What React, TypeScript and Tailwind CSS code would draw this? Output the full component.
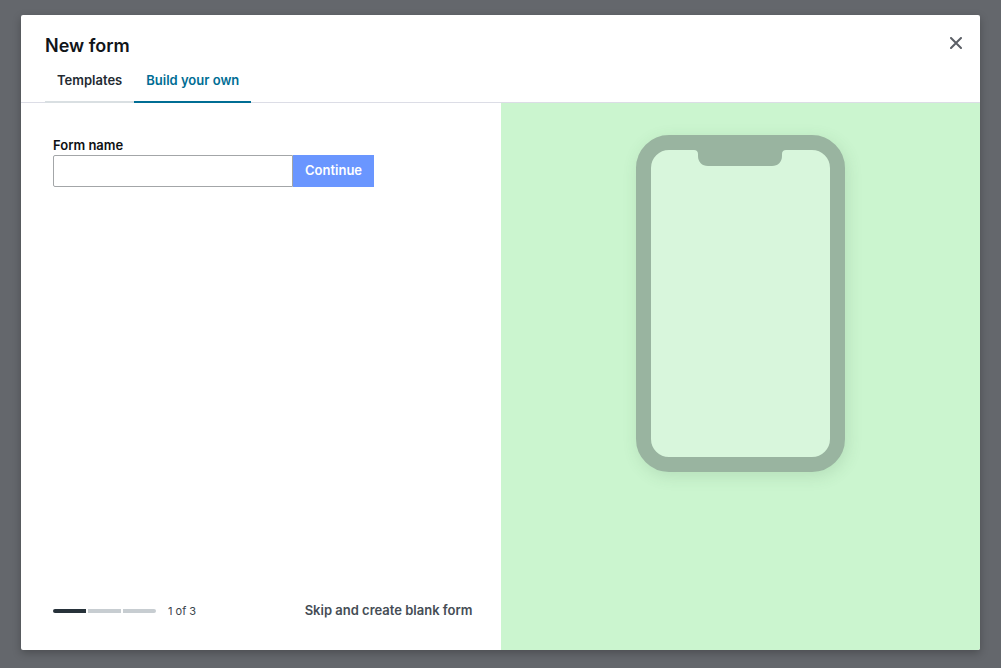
import { useState } from "react";

const TABS = ["Templates", "Build your own"];
const STEPS = 3;

function Tabs({ active, onSelect }: { active: string; onSelect: (tab: string) => void }) {
  return (
    <div role="tablist" aria-label="Form source" className="-mb-px flex px-6">
      {TABS.map((tab) => {
        const selected = tab === active;
        return (
          <button
            key={tab}
            type="button"
            role="tab"
            aria-selected={selected}
            onClick={() => onSelect(tab)}
            className={
              selected
                ? "h-[42px] border-b-2 border-[#006d94] px-3 text-[13px] font-semibold text-[#006d94]"
                : "h-[42px] border-b-2 border-[#d9dfe2] px-3 text-[13px] font-semibold text-[#232a31]"
            }
          >
            {tab}
          </button>
        );
      })}
    </div>
  );
}

function Phone() {
  return (
    <div className="h-[337px] w-[209px] rounded-[33px] border-[15px] border-[#99b4a0] bg-[#d8f6dc] shadow-[2px_4px_16px_rgba(60,100,70,0.15)]">
      <svg viewBox="0 0 92 16" className="mx-auto block h-4 w-[92px]" aria-hidden="true">
        <path
          d="M0 0H92C89.500 0 88 1.500 88 4V6C88 12 84 16 78 16H14C8 16 4 12 4 6V4C4 1.500 2.500 0 0 0Z"
          fill="#99b4a0"
        />
      </svg>
    </div>
  );
}

function Progress({ step }: { step: number }) {
  return (
    <div className="flex items-center gap-3">
      <div className="flex gap-0.5 overflow-hidden rounded-full" aria-hidden="true">
        {Array.from({ length: STEPS }, (_, i) => (
          <span key={i} className={i < step ? "h-1 w-[33px] bg-[#27323a]" : "h-1 w-[33px] bg-[#c7cdd1]"} />
        ))}
      </div>
      <span className="text-[11px] leading-4 text-[#3b444c]">
        {step} of {STEPS}
      </span>
    </div>
  );
}

export default function App() {
  const [tab, setTab] = useState("Build your own");
  const [name, setName] = useState("");

  return (
    <div className="flex min-h-screen bg-[#64676c] px-[21px] pt-[15px] pb-[18px] font-['Inter','Liberation_Sans',sans-serif]">
      <section
        role="dialog"
        aria-labelledby="dialog-title"
        className="flex flex-1 flex-col overflow-hidden rounded-xs bg-white shadow-[0_3px_8px_rgba(0,0,0,0.25)]"
      >
        <header className="border-b border-[#dcdde6]">
          <div className="flex items-center justify-between px-4 pt-[17px] pb-px">
            <h1 id="dialog-title" className="pl-2 text-lg leading-7 font-semibold text-[#111519]">
              New form
            </h1>
            <button type="button" aria-label="Close" className="-mt-1.5 flex size-4 items-center justify-center text-[#5b5f66]">
              <svg viewBox="0 0 12 12" className="size-3" fill="none" stroke="currentColor" strokeWidth="2" strokeLinecap="round">
                <path d="M1 1L11 11M11 1L1 11" />
              </svg>
            </button>
          </div>
          <Tabs active={tab} onSelect={setTab} />
        </header>

        <div className="grid flex-1 grid-cols-2">
          <div className="flex flex-col justify-between px-8 pt-8">
            <form onSubmit={(event) => event.preventDefault()}>
              <label htmlFor="form-name" className="block text-[13px] leading-5 font-semibold text-[#0e1114]">
                Form name
              </label>
              <div className="flex">
                <input
                  id="form-name"
                  type="text"
                  value={name}
                  onChange={(event) => setName(event.target.value)}
                  className="h-8 w-60 rounded-l-xs border border-[#a3a6a8] bg-white px-2 text-[13px] outline-none"
                />
                <button type="submit" className="h-8 bg-[#6a96ff] px-3 text-[13px] font-semibold text-white">
                  Continue
                </button>
              </div>
            </form>
            <footer className="flex h-[78px] items-center justify-between">
              <Progress step={1} />
              <button type="button" className="-mr-1 text-[13px] font-semibold text-[#454d55]">
                Skip and create blank form
              </button>
            </footer>
          </div>

          <div className="flex items-start justify-center bg-[#cbf5cf] pt-8">
            <Phone />
          </div>
        </div>
      </section>
    </div>
  );
}
